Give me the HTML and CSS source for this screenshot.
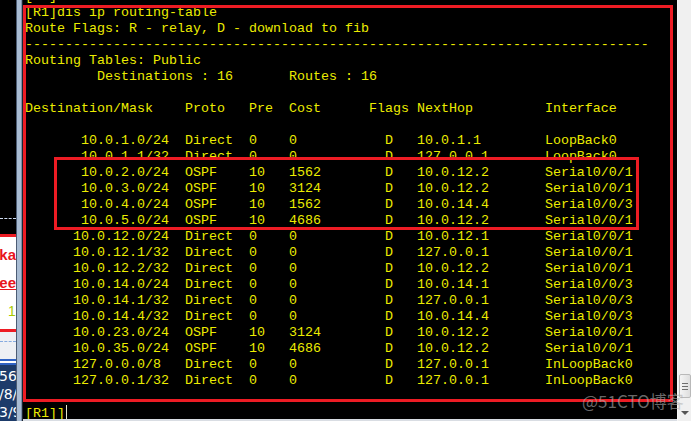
FILE: index.html
```html
<!DOCTYPE html>
<html lang="en">
<head>
    <meta charset="UTF-8">
    <meta name="viewport" content="width=device-width, initial-scale=1.0">
    <title>R1 - display ip routing-table</title>
    <link rel="stylesheet" href="styles.css">
</head>
<body>
    <div class="desktop">
        <div class="side">
            <div class="side-dark"></div>
            <div class="side-gap"></div>
            <div class="side-note">
                <div class="note-line note-red">ka</div>
                <div class="note-line note-red underline">hee</div>
                <div class="note-line note-num">1</div>
            </div>
            <div class="side-grey"><div class="side-dash"></div></div>
            <div class="side-stripe"></div>
            <div class="side-blue">
                <div>56</div>
                <div>/8/</div>
                <div>3/9</div>
            </div>
        </div>
        <div class="frame"></div>
        <div class="terminal">
            <div class="screen">
<pre class="console">[R1]
[R1]dis ip routing-table
Route Flags: R - relay, D - download to fib
------------------------------------------------------------------------------
Routing Tables: Public
         Destinations : 16       Routes : 16

Destination/Mask    Proto   Pre  Cost      Flags NextHop         Interface

       10.0.1.0/24  Direct  0    0           D   10.0.1.1        LoopBack0
       10.0.1.1/32  Direct  0    0           D   127.0.0.1       LoopBack0
       10.0.2.0/24  OSPF    10   1562        D   10.0.12.2       Serial0/0/1
       10.0.3.0/24  OSPF    10   3124        D   10.0.12.2       Serial0/0/1
       10.0.4.0/24  OSPF    10   1562        D   10.0.14.4       Serial0/0/3
       10.0.5.0/24  OSPF    10   4686        D   10.0.12.2       Serial0/0/1
      10.0.12.0/24  Direct  0    0           D   10.0.12.1       Serial0/0/1
      10.0.12.1/32  Direct  0    0           D   127.0.0.1       Serial0/0/1
      10.0.12.2/32  Direct  0    0           D   10.0.12.2       Serial0/0/1
      10.0.14.0/24  Direct  0    0           D   10.0.14.1       Serial0/0/3
      10.0.14.1/32  Direct  0    0           D   127.0.0.1       Serial0/0/3
      10.0.14.4/32  Direct  0    0           D   10.0.14.4       Serial0/0/3
      10.0.23.0/24  OSPF    10   3124        D   10.0.12.2       Serial0/0/1
      10.0.35.0/24  OSPF    10   4686        D   10.0.12.2       Serial0/0/1
      127.0.0.0/8   Direct  0    0           D   127.0.0.1       InLoopBack0
      127.0.0.1/32  Direct  0    0           D   127.0.0.1       InLoopBack0

[R1]]<span class="cursor"></span></pre>
                <div class="mark mark-outer"></div>
                <div class="mark mark-ospf"></div>
            </div>
            <div class="status"></div>
        </div>
        <div class="scrollbar">
            <div class="thumb"><span></span><span></span><span></span></div>
            <div class="arrow"><span></span></div>
        </div>
        <div class="watermark">@51CTO博客</div>
    </div>
</body>
</html>
```
FILE: styles.css
```css
body {
    margin: 0;
    background-color: #000;
    font-family: "Liberation Sans", Arial, sans-serif;
}
.desktop {
    position: relative;
    display: flex;
    width: 691px;
    height: 421px;
    overflow: hidden;
}

/* strip of the window behind */
.side {
    width: 16px;
    display: flex;
    flex-direction: column;
    background-color: #000;
    overflow: hidden;
}
.side-dark {
    height: 226px;
    border-bottom: 1px dashed #cfdcf2;
}
.side-gap {
    height: 15px;
}
.side-note {
    height: 86px;
    border-top: 3px solid #ed1c24;
    border-bottom: 3px solid #ed1c24;
    background-color: #fff;
    padding-top: 8px;
    box-sizing: content-box;
}
.note-line {
    display: flex;
    justify-content: flex-end;
    height: 20px;
    line-height: 20px;
    margin-bottom: 8px;
    white-space: nowrap;
    font-size: 15px;
    font-weight: bold;
}
.note-red {
    color: #e8141c;
}
.underline {
    text-decoration: underline;
}
.note-num {
    justify-content: flex-start;
    padding-left: 8px;
    color: #a8c800;
    font-weight: normal;
    font-size: 14px;
}
.side-grey {
    height: 28px;
    padding-top: 9px;
    box-sizing: border-box;
    background-color: #eef0f4;
}
.side-dash {
    border-top: 1px dashed #86abe0;
}
.side-stripe {
    height: 6px;
    background: linear-gradient(#2f62c4 0 2px, #fff 2px 4px, #2f62c4 4px 6px);
}
.side-blue {
    flex: 1;
    background-color: #1d3b6a;
    color: #fff;
    font-family: "DejaVu Sans", sans-serif;
    font-size: 14px;
    line-height: 18px;
    padding-top: 2px;
    text-indent: -1px;
    white-space: nowrap;
}

.frame {
    width: 7px;
    background: linear-gradient(to right, #4c5c74 0 1px, #a9bcd3 1px 5px, #7b8fa9 5px 6px, #1c2430 6px 7px);
}

/* terminal */
.terminal {
    width: 654px;
    display: flex;
    flex-direction: column;
}
.screen {
    position: relative;
    flex: 1;
    background-color: #000;
    overflow: hidden;
}
.console {
    margin: -11px 0 0 0;
    padding-left: 2px;
    font-family: "Liberation Mono", "Courier New", monospace;
    font-size: 13.34px;
    line-height: 16px;
    color: #ecec00;
}
.cursor {
    display: inline-block;
    width: 1px;
    height: 15px;
    margin-left: 1px;
    vertical-align: -3px;
    background-color: #e6e6d0;
}
.status {
    height: 2px;
    background-color: #d9dde3;
}

/* highlight boxes drawn over the capture */
.mark {
    position: absolute;
    border: 3px solid #ed1c24;
    box-sizing: border-box;
}
.mark-outer {
    left: 0;
    top: 5px;
    width: 650px;
    height: 397px;
}
.mark-ospf {
    left: 31px;
    top: 157px;
    width: 585px;
    height: 73px;
}

/* scrollbar */
.scrollbar {
    width: 14px;
    display: flex;
    flex-direction: column;
    justify-content: flex-end;
    background-color: #f0f0f0;
    border-left: 1px solid #f7f7f7;
    box-sizing: border-box;
}
.thumb {
    height: 22px;
    margin-bottom: 6px;
    margin-left: 1px;
    border: 1px solid #b9b9b9;
    border-radius: 2px;
    background: linear-gradient(to right, #f4f4f4, #dedede);
    display: flex;
    flex-direction: column;
    align-items: center;
    justify-content: center;
    gap: 2px;
}
.thumb span {
    width: 6px;
    height: 1px;
    background-color: #6d6d6d;
}
.arrow {
    height: 17px;
    display: flex;
    align-items: center;
    justify-content: center;
}
.arrow span {
    width: 0;
    height: 0;
    border-left: 4px solid transparent;
    border-right: 4px solid transparent;
    border-top: 4px solid #555;
}

.watermark {
    position: absolute;
    left: 582px;
    top: 392px;
    font-family: "Noto Sans CJK SC", "Noto Sans", sans-serif;
    font-size: 17px;
    line-height: 17px;
    color: rgba(175, 175, 175, 0.6);
    white-space: nowrap;
}
```
